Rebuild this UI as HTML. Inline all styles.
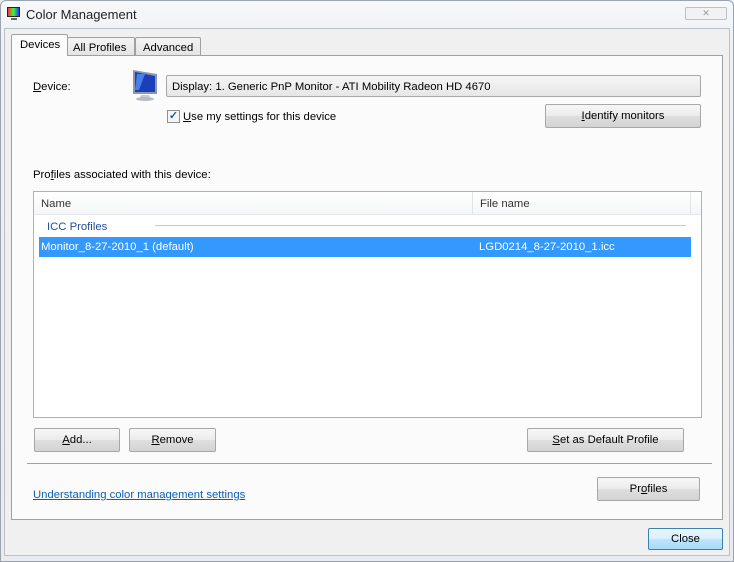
<!DOCTYPE html>
<html><head><style>
*{margin:0;padding:0;box-sizing:border-box}
body{width:734px;height:562px;background:#e9eef3;font-family:"Liberation Sans",sans-serif;font-size:11.3px;color:#000;position:relative;overflow:hidden}
.a{position:absolute}
.btn{position:absolute;border:1px solid #a8a8a8;border-radius:2px;background:linear-gradient(#f7f7f7,#ebebeb 50%,#dedede 51%,#d4d4d4);text-align:center;font-size:11.3px;color:#000}
u{text-decoration:underline}
</style></head><body>
<div class="a" style="left:0;top:0;width:734px;height:562px;border:1px solid #9aa4ae;border-radius:6px 6px 0 0;background:linear-gradient(#f6f8fa,#eef1f4 40px,#e8ecf0)"></div>
<svg class="a" style="left:6px;top:6px" width="16" height="16"><rect x="1" y="1" width="13" height="10" fill="#223" /><rect x="2" y="2" width="11" height="8" fill="url(#g)"/><defs><linearGradient id="g"><stop offset="0" stop-color="#f33"/><stop offset=".5" stop-color="#3f3"/><stop offset="1" stop-color="#33f"/></linearGradient></defs><rect x="5" y="12" width="6" height="2" fill="#666"/></svg>
<div class="a" style="left:26px;top:7px;font-size:13px;color:#222">Color Management</div>
<div class="a" style="left:685px;top:7px;width:42px;height:13px;border:1px solid #b8c0c8;border-radius:2px;background:#f0f2f4;font-size:9px;color:#999;text-align:center;line-height:11px">✕</div>
<div class="a" style="left:4px;top:28px;width:726px;height:528px;background:#f0f0f0;border:1px solid #b9c2cb"></div>
<div class="a" style="left:67px;top:37px;width:68px;height:19px;border:1px solid #a0a0a0;border-bottom:none;border-radius:2px 2px 0 0;background:linear-gradient(#f4f4f4,#e3e3e3);padding:4px 0 0 5px">All Profiles</div>
<div class="a" style="left:135px;top:37px;width:66px;height:19px;border:1px solid #a0a0a0;border-bottom:none;border-radius:2px 2px 0 0;background:linear-gradient(#f4f4f4,#e3e3e3);padding:4px 0 0 7px">Advanced</div>
<div class="a" style="left:11px;top:55px;width:712px;height:465px;border:1px solid #a0a0a0;background:#fbfbfb"></div>
<div class="a" style="left:11px;top:34px;width:57px;height:22px;border:1px solid #a0a0a0;border-bottom:none;border-radius:2px 2px 0 0;background:#fbfbfb;padding:4px 0 0 8px">Devices</div>
<div class="a" style="left:33px;top:81px"><u>D</u>evice:</div>
<svg class="a" style="left:129px;top:68px" width="32" height="34"><path d="M4 2 L28 6 L28 26 L4 26 Z" fill="#8a9aae"/><path d="M6 4 L26 8 L26 24 L6 24 Z" fill="#1a3fb8"/><path d="M8 6 L16 6 L10 22 L6 22 Z" fill="#4a7fe8"/><path d="M12 27 L20 27 L22 31 L10 31 Z" fill="#c8ccd0"/><ellipse cx="16" cy="31" rx="9" ry="2" fill="#b8bcc0"/></svg>
<div class="a" style="left:166px;top:75px;width:535px;height:22px;border:1px solid #a8a8a8;border-radius:2px;background:linear-gradient(#f6f6f6,#e6e6e6);padding:5px 0 0 5px">Display: 1. Generic PnP Monitor - ATI Mobility Radeon HD 4670</div>
<div class="a" style="left:167px;top:110px;width:13px;height:13px;border:1px solid #8f8f8f;background:#f4f4f4;color:#1e5f9e;font-size:11px;line-height:11px;text-align:center;font-weight:bold">✓</div>
<div class="a" style="left:183px;top:111px"><u>U</u>se my settings for this device</div>
<div class="btn" style="left:545px;top:104px;width:156px;height:24px;line-height:23px"><u>I</u>dentify monitors</div>
<div class="a" style="left:33px;top:169px">Pro<u>f</u>iles associated with this device:</div>
<div class="a" style="left:33px;top:191px;width:669px;height:227px;border:1px solid #adb2b5;background:#fff"></div>
<div class="a" style="left:34px;top:192px;width:667px;height:23px;background:linear-gradient(#fff,#f5f6f7);border-bottom:1px solid #e4e7ea"></div>
<div class="a" style="left:472px;top:192px;width:1px;height:22px;background:#e0e3e6"></div>
<div class="a" style="left:690px;top:192px;width:1px;height:22px;background:#e0e3e6"></div>
<div class="a" style="left:41px;top:198px;color:#333">Name</div>
<div class="a" style="left:480px;top:198px;color:#333">File name</div>
<div class="a" style="left:47px;top:221px;color:#1e4e9a">ICC Profiles</div>
<div class="a" style="left:155px;top:225px;width:531px;height:1px;background:#b9cfe0"></div>
<div class="a" style="left:39px;top:237px;width:652px;height:20px;background:#3399ff;color:#fff;padding:4px 0 0 2px">Monitor_8-27-2010_1 (default)<span class="a" style="left:440px;top:4px">LGD0214_8-27-2010_1.icc</span></div>
<div class="btn" style="left:34px;top:428px;width:86px;height:24px;line-height:23px"><u>A</u>dd...</div>
<div class="btn" style="left:129px;top:428px;width:87px;height:24px;line-height:23px"><u>R</u>emove</div>
<div class="btn" style="left:527px;top:428px;width:157px;height:24px;line-height:23px"><u>S</u>et as Default Profile</div>
<div class="a" style="left:27px;top:463px;width:685px;height:1px;background:#a0a0a0"></div>
<div class="a" style="left:33px;top:489px;color:#0b5fb5;text-decoration:underline">Understanding color management settings</div>
<div class="btn" style="left:597px;top:477px;width:103px;height:24px;line-height:23px">Pr<u>o</u>files</div>
<div class="btn" style="left:648px;top:528px;width:75px;height:22px;line-height:21px;border-color:#3c7fb1;background:linear-gradient(#eaf6fd,#d9f0fc 50%,#bee6fd 51%,#a7d9f5)">Close</div>
</body></html>
